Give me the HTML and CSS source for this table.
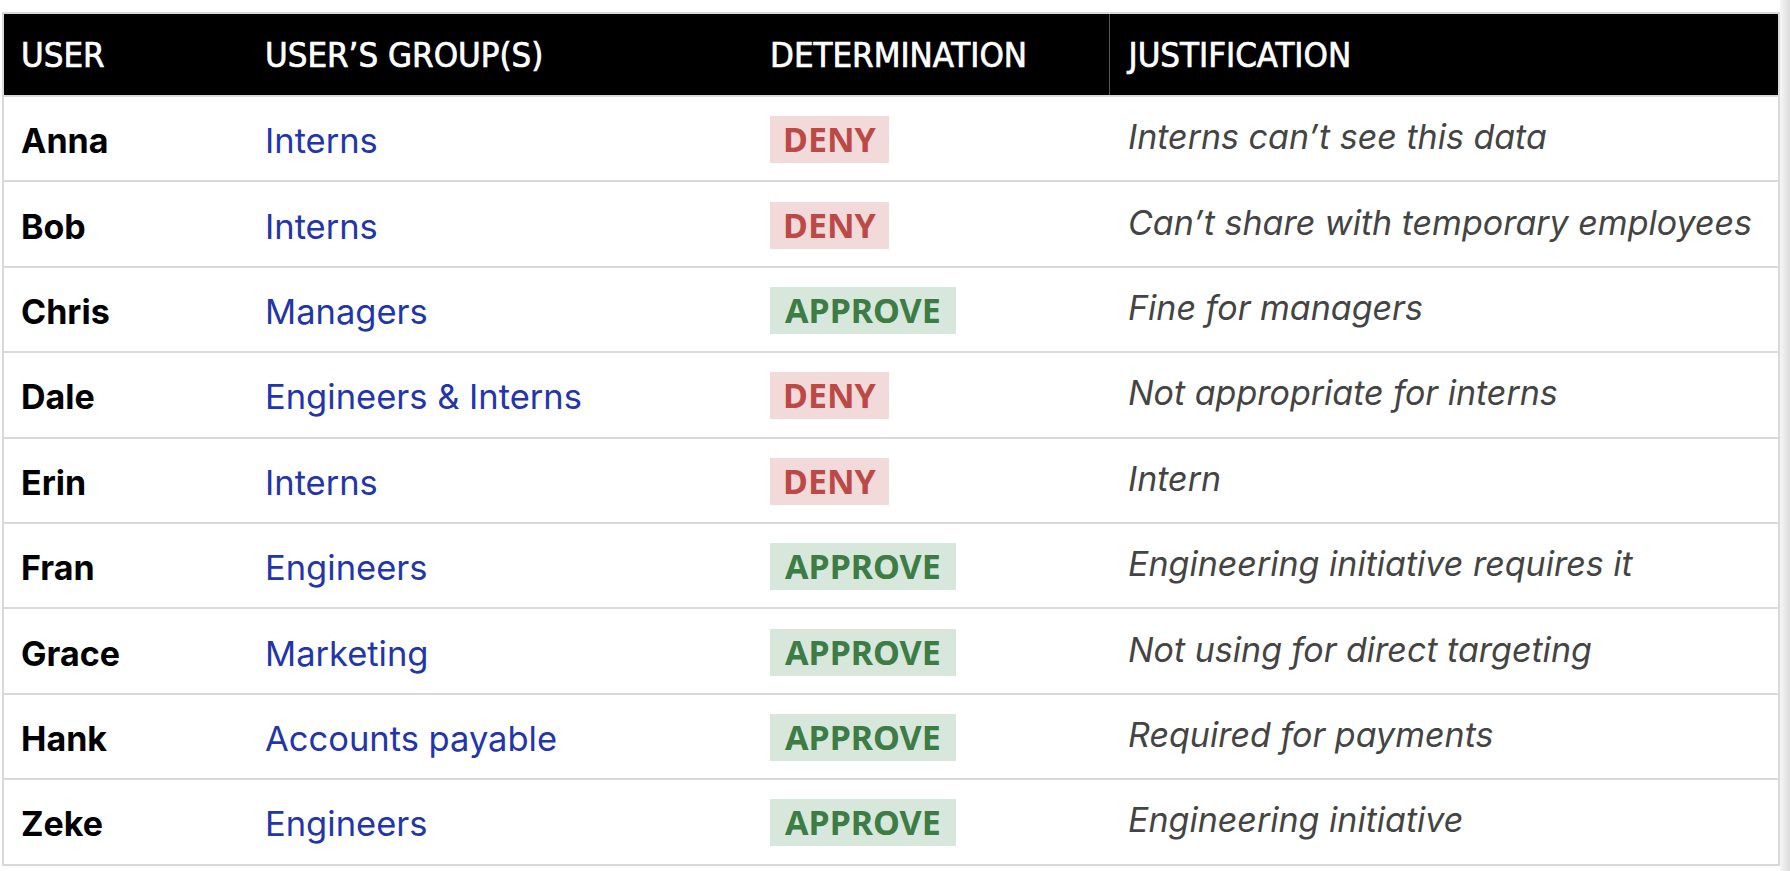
FILE: index.html
```html
<!DOCTYPE html>
<html>
<head>
<meta charset="utf-8">
<link rel="stylesheet" href="styles.css">
</head>
<body>
<table class="grid">
  <colgroup>
    <col class="c-user">
    <col class="c-group">
    <col class="c-det">
    <col class="c-just">
  </colgroup>
  <thead>
    <tr>
      <th>USER</th>
      <th>USER’S GROUP(S)</th>
      <th>DETERMINATION</th>
      <th class="th-just">JUSTIFICATION</th>
    </tr>
  </thead>
  <tbody>
    <tr><td class="name">Anna</td><td class="group">Interns</td><td class="det"><span class="badge deny">DENY</span></td><td class="just">Interns can’t see this data</td></tr>
    <tr><td class="name">Bob</td><td class="group">Interns</td><td class="det"><span class="badge deny">DENY</span></td><td class="just">Can’t share with temporary employees</td></tr>
    <tr><td class="name">Chris</td><td class="group">Managers</td><td class="det"><span class="badge approve">APPROVE</span></td><td class="just">Fine for managers</td></tr>
    <tr><td class="name">Dale</td><td class="group">Engineers &amp; Interns</td><td class="det"><span class="badge deny">DENY</span></td><td class="just">Not appropriate for interns</td></tr>
    <tr><td class="name">Erin</td><td class="group">Interns</td><td class="det"><span class="badge deny">DENY</span></td><td class="just">Intern</td></tr>
    <tr><td class="name">Fran</td><td class="group">Engineers</td><td class="det"><span class="badge approve">APPROVE</span></td><td class="just">Engineering initiative requires it</td></tr>
    <tr><td class="name">Grace</td><td class="group">Marketing</td><td class="det"><span class="badge approve">APPROVE</span></td><td class="just">Not using for direct targeting</td></tr>
    <tr><td class="name">Hank</td><td class="group">Accounts payable</td><td class="det"><span class="badge approve">APPROVE</span></td><td class="just">Required for payments</td></tr>
    <tr><td class="name">Zeke</td><td class="group">Engineers</td><td class="det"><span class="badge approve">APPROVE</span></td><td class="just">Engineering initiative</td></tr>
  </tbody>
</table>
</body>
</html>
```
FILE: styles.css
```css
html, body {
  margin: 0;
  height: 100%;
}
body {
  padding: 12px 0 0 2px;
  box-sizing: border-box;
  background: #fff linear-gradient(to right, #f6f6f6, #dcdcdc) right top / 10px 100% no-repeat;
  font-family: Inter, "Liberation Sans", sans-serif;
}
.grid {
  width: 1778px;
  border-collapse: collapse;
  border: 2px solid #d9d9d9;
  table-layout: fixed;
}
.c-user { width: 243px; }
.c-group { width: 505px; }
.c-det { width: 358px; }
thead tr {
  height: 83px;
  border-bottom: 2px solid #d9d9d9;
}
thead th {
  background: #000;
  color: #fff;
  padding: 0 19px;
  text-align: left;
  font-family: "DejaVu Sans Condensed", "DejaVu Sans", sans-serif;
  font-weight: 400;
  font-size: 34.5px;
  -webkit-text-stroke: 0.7px #fff;
}
thead th:first-child { padding-left: 17px; }
.th-just { border-left: 1px solid #555; }
tbody tr {
  height: 85.4px;
  border-bottom: 2px solid #d9d9d9;
}
tbody td {
  padding: 0 19px;
  font-size: 34px;
  vertical-align: middle;
  white-space: nowrap;
}
.name { font-weight: 700; color: #000; padding: 4px 19px 0 17px; }
.group { color: #2235aa; font-size: 34.5px; padding-top: 4px; }
.det { padding-top: 2px; }
.just { color: #444; font-style: italic; padding-bottom: 4px; }
.badge {
  display: inline-block;
  padding: 0 15px;
  height: 47px;
  line-height: 47px;
  font-family: "Noto Sans", "Open Sans", sans-serif;
  font-weight: 700;
  font-size: 34px;
}
.deny { background: #f2d9da; color: #bb4a47; padding: 0 13px; }
.approve { background: #d8e7dc; color: #3d7c45; }
```
